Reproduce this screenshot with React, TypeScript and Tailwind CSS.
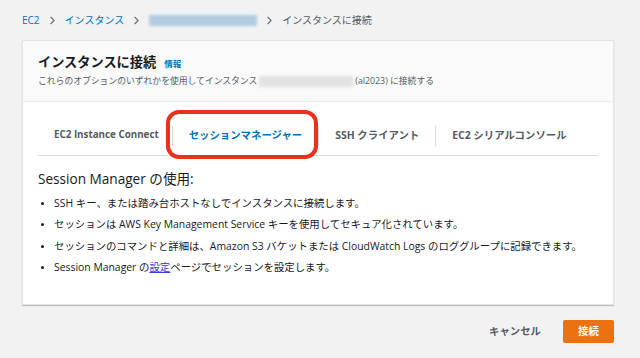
import { ChevronRight } from "lucide-react";

const font = { fontFamily: '"Open Sans", "Noto Sans CJK JP", sans-serif' };

const tabs = ["EC2 Instance Connect", "セッションマネージャー", "SSH クライアント", "EC2 シリアルコンソール"];

export default function App() {
    return (
        <div style={font} className="w-[640px] h-[358px] overflow-hidden bg-[#f2f2f2] px-[22px] text-[#16191f]">
            {/* breadcrumb */}
            <div className="h-[40px] flex items-center text-[10px]">
                <span className="text-[#0073bb]">EC2</span>
                <ChevronRight size={13} strokeWidth={2} className="mx-[6px] text-[#687078]" />
                <span className="text-[#0073bb]">インスタンス</span>
                <ChevronRight size={13} strokeWidth={2} className="mx-[6px] text-[#687078]" />
                <div className="w-[108px] h-[11px] bg-[#b3cbe2] blur-[1.5px]" />
                <ChevronRight size={13} strokeWidth={2} className="mx-[6px] text-[#687078]" />
                <span className="text-[#545b64]">インスタンスに接続</span>
            </div>

            {/* card */}
            <div className="w-[592px] bg-white border border-[#e4e4e4] shadow-[0_1px_1px_rgba(0,0,0,0.2)]">
                <div className="h-[61px] bg-[#fafafa] border-b border-[#eaeded] px-[15px] pt-[12px]">
                    <div className="flex items-baseline gap-[8px]">
                        <h1 className="text-[13.2px] font-bold leading-[18px]">インスタンスに接続</h1>
                        <span className="text-[8.5px] font-bold text-[#0073bb]">情報</span>
                    </div>
                    <div className="flex items-center mt-[4px] text-[8.8px] text-[#545b64] leading-[12px]">
                        <span>これらのオプションのいずれかを使用してインスタンス</span>
                        <div className="w-[94px] h-[11px] mx-[2px] bg-[#e2e2e2] blur-[1.5px]" />
                        <span>(al2023) に接続する</span>
                    </div>
                </div>

                <div className="px-[15px] pt-[14px] pb-[26px]">
                    <div className="flex items-center h-[40px] border-b border-[#d5dbdb] text-[10.4px] font-bold text-[#545b64]">
                        {tabs.map((t, i) => (
                            <div key={t} className="flex items-center h-full">
                                {i > 0 && <div className="w-px h-[20px] bg-[#d5dbdb]" />}
                                <div
                                    className={
                                        "relative h-full flex items-center px-[16px] " +
                                        (i === 0 ? "text-[9.8px] pr-[13px] " : "") +
                                        (i === 1 ? "text-[#0073bb]" : "")
                                    }
                                >
                                    {t}
                                    {i === 1 && (
                                        <div className="absolute left-[-7px] right-[0px] top-[-6px] bottom-[-4px] border-[4px] border-[#e8321e] rounded-[13px]" />
                                    )}
                                </div>
                            </div>
                        ))}
                    </div>

                    <h2 className="mt-[14px] text-[13.6px] leading-[18px]">Session Manager の使用:</h2>
                    <ul className="mt-[5px] text-[10.4px] leading-[21.3px]">
                        {[
                            <>SSH キー、または踏み台ホストなしでインスタンスに接続します。</>,
                            <>セッションは AWS Key Management Service キーを使用してセキュア化されています。</>,
                            <>セッションのコマンドと詳細は、Amazon S3 バケットまたは CloudWatch Logs のロググループに記録できます。</>,
                            <>
                                Session Manager の<span className="text-[#3a3ad6] underline">設定</span>ページでセッションを設定します。
                            </>,
                        ].map((c, i) => (
                            <li key={i} className="flex items-center">
                                <span className="w-[3px] h-[3px] rounded-full bg-[#16191f] ml-[3px] mr-[10px]" />
                                <span>{c}</span>
                            </li>
                        ))}
                    </ul>
                </div>
            </div>

            {/* footer */}
            <div className="w-[592px] flex justify-end items-center gap-[22px] mt-[15px] text-[10.4px] font-bold">
                <span className="text-[#545b64]">キャンセル</span>
                <button className="w-[51px] h-[23px] rounded-[2px] bg-[#ec7211] text-white">接続</button>
            </div>
        </div>
    );
}
